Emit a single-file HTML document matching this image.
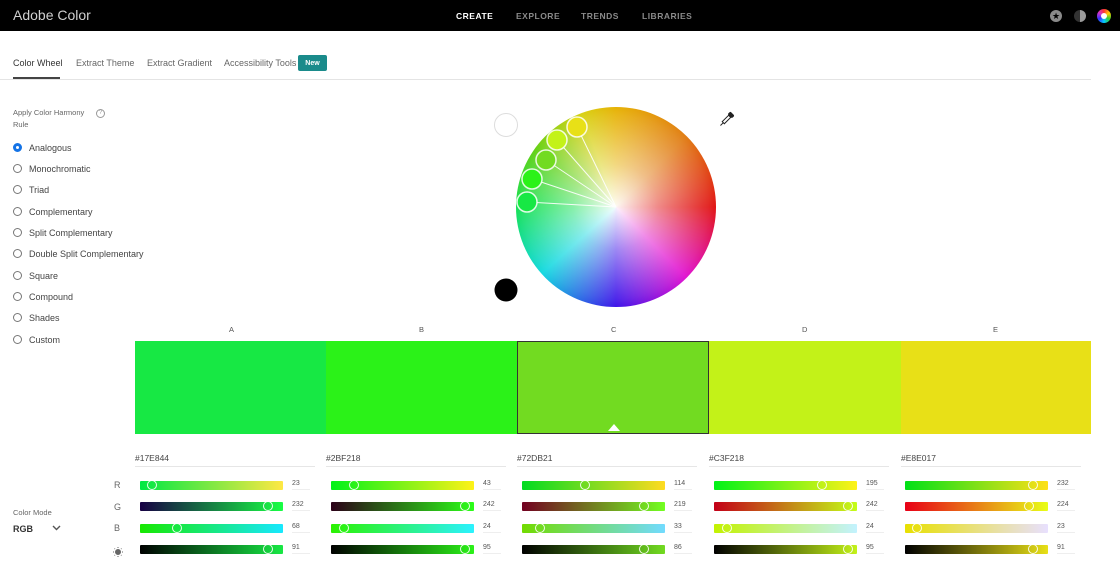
<!DOCTYPE html>
<html><head><meta charset="utf-8"><style>
*{margin:0;padding:0;box-sizing:border-box}
body{width:1120px;height:568px;overflow:hidden;background:#fff;font-family:"Liberation Sans",sans-serif;color:#4b4b4b;position:relative}
.abs{position:absolute}
.top{position:absolute;left:0;top:0;width:1120px;height:31px;background:#000}
.nav{position:absolute;top:11px;font-size:8.5px;font-weight:bold;letter-spacing:.5px;color:#8a8a8a}
.tab{position:absolute;top:58px;font-size:9px;color:#666}
.radio{position:absolute;left:13px;width:9px;height:9px;border:1px solid #777;border-radius:50%}
.rl{position:absolute;left:29px;font-size:9px;color:#444}
.lab{position:absolute;top:325px;font-size:7.5px;color:#555}
.sw{position:absolute;top:341px;height:93px}
.hex{position:absolute;top:453px;font-size:8.5px;color:#444;width:180px;border-bottom:1px solid #e6e6e6;padding-bottom:3px}
.bar{position:absolute;width:143px;height:9px;border-radius:1px}
.k{position:absolute;top:-1px;width:10px;height:10px;border:1px solid rgba(255,255,255,.9);border-radius:50%;margin-left:-5px}
.v{position:absolute;font-size:7px;color:#555;width:18px;border-bottom:1px solid #eee;padding-bottom:2px}
.rowl{position:absolute;left:114px;font-size:9px;color:#666}
</style></head><body>
<div class="top"></div>
<div class="abs" style="left:13px;top:7px;font-size:14px;color:#d0d0d0">Adobe Color</div>
<div class="nav" style="left:456px;color:#fff">CREATE</div>
<div class="nav" style="left:516px">EXPLORE</div>
<div class="nav" style="left:581px">TRENDS</div>
<div class="nav" style="left:642px">LIBRARIES</div>
<div class="abs" style="left:1050px;top:10px;width:12px;height:12px;border-radius:50%;background:#8a8a8a;color:#000;font-size:9px;line-height:12px;text-align:center">★</div>
<div class="abs" style="left:1074px;top:10px;width:12px;height:12px;border-radius:50%;background:linear-gradient(90deg,#333 50%,#9a9a9a 50%)"></div>
<div class="abs" style="left:1097px;top:9px;width:14px;height:14px;border-radius:50%;background:conic-gradient(#f33,#fc0,#3c3,#0cf,#33f,#c3c,#f33)"><div style="margin:4px;width:6px;height:6px;border-radius:50%;background:#fff"></div></div>

<div class="tab" style="left:13px;color:#333">Color Wheel</div>
<div class="abs" style="left:13px;top:77px;width:47px;height:2px;background:#444"></div>
<div class="tab" style="left:76px">Extract Theme</div>
<div class="tab" style="left:147px">Extract Gradient</div>
<div class="tab" style="left:224px">Accessibility Tools</div>
<div class="abs" style="left:298px;top:55px;width:29px;height:16px;background:#1a8b8b;border-radius:2px;color:#fff;font-size:7px;font-weight:bold;display:flex;align-items:center;justify-content:center">New</div>
<div class="abs" style="left:0;top:79px;width:1091px;height:1px;background:#e4e4e4"></div>

<div class="abs" style="left:13px;top:107px;font-size:7.5px;line-height:12px;color:#666">Apply Color Harmony<br>Rule</div>
<div class="abs" style="left:96px;top:109px;width:9px;height:9px;border:1px solid #999;border-radius:50%;font-size:6px;text-align:center;line-height:7px;color:#999">?</div>

<div class="radio" style="top:143px;border:3px solid #1473e6"></div><div class="rl" style="top:143px">Analogous</div>
<div class="radio" style="top:164px"></div><div class="rl" style="top:164px">Monochromatic</div>
<div class="radio" style="top:185px"></div><div class="rl" style="top:185px">Triad</div>
<div class="radio" style="top:207px"></div><div class="rl" style="top:207px">Complementary</div>
<div class="radio" style="top:228px"></div><div class="rl" style="top:228px">Split Complementary</div>
<div class="radio" style="top:249px"></div><div class="rl" style="top:249px">Double Split Complementary</div>
<div class="radio" style="top:271px"></div><div class="rl" style="top:271px">Square</div>
<div class="radio" style="top:292px"></div><div class="rl" style="top:292px">Compound</div>
<div class="radio" style="top:313px"></div><div class="rl" style="top:313px">Shades</div>
<div class="radio" style="top:335px"></div><div class="rl" style="top:335px">Custom</div>

<div class="abs" style="left:516px;top:107px;width:200px;height:200px;border-radius:50%;background:conic-gradient(#e6b000,#e07a10 45deg,#e01010 90deg,#e010d0 135deg,#3a10e8 180deg,#10d8e0 228deg,#12e050 270deg,#60d010 305deg,#d8d010 340deg,#e6b000)"></div>
<div class="abs" style="left:516px;top:107px;width:200px;height:200px;border-radius:50%;background:radial-gradient(circle,rgba(255,255,255,.95) 0%,rgba(255,255,255,.5) 30%,rgba(255,255,255,.1) 65%,rgba(255,255,255,0) 72%)"></div>
<svg class="abs" style="left:0;top:0" width="1120" height="568">
<g stroke="#fff" stroke-width="1" fill="none" opacity=".9">
<line x1="616" y1="207" x2="577" y2="127"/><line x1="616" y1="207" x2="557" y2="140"/><line x1="616" y1="207" x2="546" y2="160"/><line x1="616" y1="207" x2="532" y2="179"/><line x1="616" y1="207" x2="527" y2="202"/>
</g>
<g stroke="rgba(255,255,255,.85)" stroke-width="1.5">
<circle cx="577" cy="127" r="10" fill="#E8E017"/><circle cx="557" cy="140" r="10" fill="#C3F218"/><circle cx="546" cy="160" r="10" fill="#72DB21"/><circle cx="532" cy="179" r="10" fill="#2BF218"/><circle cx="527" cy="202" r="10" fill="#17E844"/>
</g>
<circle cx="506" cy="125" r="11.5" fill="#fff" stroke="#ddd"/>
<circle cx="506" cy="290" r="11.5" fill="#000"/>
<g transform="translate(724,122) rotate(45)"><rect x="-1.5" y="-8" width="3" height="9" fill="none" stroke="#222"/><rect x="-3" y="-12" width="6" height="4" rx="1.5" fill="#222"/><line x1="0" y1="1" x2="0" y2="5" stroke="#222"/></g>
<g transform="translate(118,552)" stroke="#666" stroke-width="1"><circle r="2.5" fill="#666"/><line x1="0" y1="-5" x2="0" y2="-4"/><line x1="0" y1="4" x2="0" y2="5"/><line x1="-5" y1="0" x2="-4" y2="0"/><line x1="4" y1="0" x2="5" y2="0"/><line x1="-3.5" y1="-3.5" x2="-3" y2="-3"/><line x1="3" y1="3" x2="3.5" y2="3.5"/><line x1="-3.5" y1="3.5" x2="-3" y2="3"/><line x1="3" y1="-3" x2="3.5" y2="-3.5"/></g>
</svg>

<div class="lab" style="left:229px">A</div><div class="lab" style="left:419px">B</div><div class="lab" style="left:611px">C</div><div class="lab" style="left:802px">D</div><div class="lab" style="left:993px">E</div>
<div class="sw" style="left:135px;width:191px;background:#17E844"></div>
<div class="sw" style="left:326px;width:191px;background:#2BF218"></div>
<div class="sw" style="left:517px;width:192px;background:#72DB21;border:1px solid #333"></div>
<div class="sw" style="left:709px;width:192px;background:#C3F218"></div>
<div class="sw" style="left:901px;width:190px;background:#E8E017"></div>
<div class="abs" style="left:608px;top:424px;width:0;height:0;border-left:6px solid transparent;border-right:6px solid transparent;border-bottom:7px solid #fff"></div>

<div class="hex" style="left:135px">#17E844</div>
<div class="hex" style="left:326px">#2BF218</div>
<div class="hex" style="left:517px">#72DB21</div>
<div class="hex" style="left:709px">#C3F218</div>
<div class="hex" style="left:901px">#E8E017</div>

<div class="rowl" style="top:480px">R</div><div class="rowl" style="top:502px">G</div><div class="rowl" style="top:523px">B</div>

<div class="bar" style="left:140px;top:481px;background:linear-gradient(90deg,rgb(0,232,68),rgb(255,232,68))"><div class="k" style="left:12px"></div></div>
<div class="bar" style="left:140px;top:502px;background:linear-gradient(90deg,rgb(23,0,68),rgb(23,255,68))"><div class="k" style="left:128px"></div></div>
<div class="bar" style="left:140px;top:524px;background:linear-gradient(90deg,rgb(23,232,0),rgb(23,232,255))"><div class="k" style="left:37px"></div></div>
<div class="bar" style="left:140px;top:545px;background:linear-gradient(90deg,#000,#17E844)"><div class="k" style="left:128px"></div></div>
<div class="v" style="left:292px;top:480px">23</div><div class="v" style="left:292px;top:501px">232</div><div class="v" style="left:292px;top:523px">68</div><div class="v" style="left:292px;top:544px">91</div>
<div class="bar" style="left:331px;top:481px;background:linear-gradient(90deg,rgb(0,242,24),rgb(255,242,24))"><div class="k" style="left:23px"></div></div>
<div class="bar" style="left:331px;top:502px;background:linear-gradient(90deg,rgb(43,0,24),rgb(43,255,24))"><div class="k" style="left:134px"></div></div>
<div class="bar" style="left:331px;top:524px;background:linear-gradient(90deg,rgb(43,242,0),rgb(43,242,255))"><div class="k" style="left:13px"></div></div>
<div class="bar" style="left:331px;top:545px;background:linear-gradient(90deg,#000,#2BF218)"><div class="k" style="left:134px"></div></div>
<div class="v" style="left:483px;top:480px">43</div><div class="v" style="left:483px;top:501px">242</div><div class="v" style="left:483px;top:523px">24</div><div class="v" style="left:483px;top:544px">95</div>
<div class="bar" style="left:522px;top:481px;background:linear-gradient(90deg,rgb(0,219,33),rgb(255,219,33))"><div class="k" style="left:63px"></div></div>
<div class="bar" style="left:522px;top:502px;background:linear-gradient(90deg,rgb(114,0,33),rgb(114,255,33))"><div class="k" style="left:122px"></div></div>
<div class="bar" style="left:522px;top:524px;background:linear-gradient(90deg,rgb(114,219,0),rgb(114,219,255))"><div class="k" style="left:18px"></div></div>
<div class="bar" style="left:522px;top:545px;background:linear-gradient(90deg,#000,#72DB21)"><div class="k" style="left:122px"></div></div>
<div class="v" style="left:674px;top:480px">114</div><div class="v" style="left:674px;top:501px">219</div><div class="v" style="left:674px;top:523px">33</div><div class="v" style="left:674px;top:544px">86</div>
<div class="bar" style="left:714px;top:481px;background:linear-gradient(90deg,rgb(0,242,24),rgb(255,242,24))"><div class="k" style="left:108px"></div></div>
<div class="bar" style="left:714px;top:502px;background:linear-gradient(90deg,rgb(195,0,24),rgb(195,255,24))"><div class="k" style="left:134px"></div></div>
<div class="bar" style="left:714px;top:524px;background:linear-gradient(90deg,rgb(195,242,0),rgb(195,242,255))"><div class="k" style="left:13px"></div></div>
<div class="bar" style="left:714px;top:545px;background:linear-gradient(90deg,#000,#C3F218)"><div class="k" style="left:134px"></div></div>
<div class="v" style="left:866px;top:480px">195</div><div class="v" style="left:866px;top:501px">242</div><div class="v" style="left:866px;top:523px">24</div><div class="v" style="left:866px;top:544px">95</div>
<div class="bar" style="left:905px;top:481px;background:linear-gradient(90deg,rgb(0,224,23),rgb(255,224,23))"><div class="k" style="left:128px"></div></div>
<div class="bar" style="left:905px;top:502px;background:linear-gradient(90deg,rgb(232,0,23),rgb(232,255,23))"><div class="k" style="left:124px"></div></div>
<div class="bar" style="left:905px;top:524px;background:linear-gradient(90deg,rgb(232,224,0),rgb(232,224,255))"><div class="k" style="left:12px"></div></div>
<div class="bar" style="left:905px;top:545px;background:linear-gradient(90deg,#000,#E8E017)"><div class="k" style="left:128px"></div></div>
<div class="v" style="left:1057px;top:480px">232</div><div class="v" style="left:1057px;top:501px">224</div><div class="v" style="left:1057px;top:523px">23</div><div class="v" style="left:1057px;top:544px">91</div>

<div class="abs" style="left:13px;top:508px;font-size:7.5px;color:#666">Color Mode</div>
<div class="abs" style="left:13px;top:524px;font-size:9px;font-weight:bold;color:#333">RGB</div>
<svg class="abs" style="left:52px;top:525px" width="9" height="6"><path d="M1 1 L4.5 4.5 L8 1" stroke="#555" stroke-width="1.4" fill="none"/></svg>
</body></html>
